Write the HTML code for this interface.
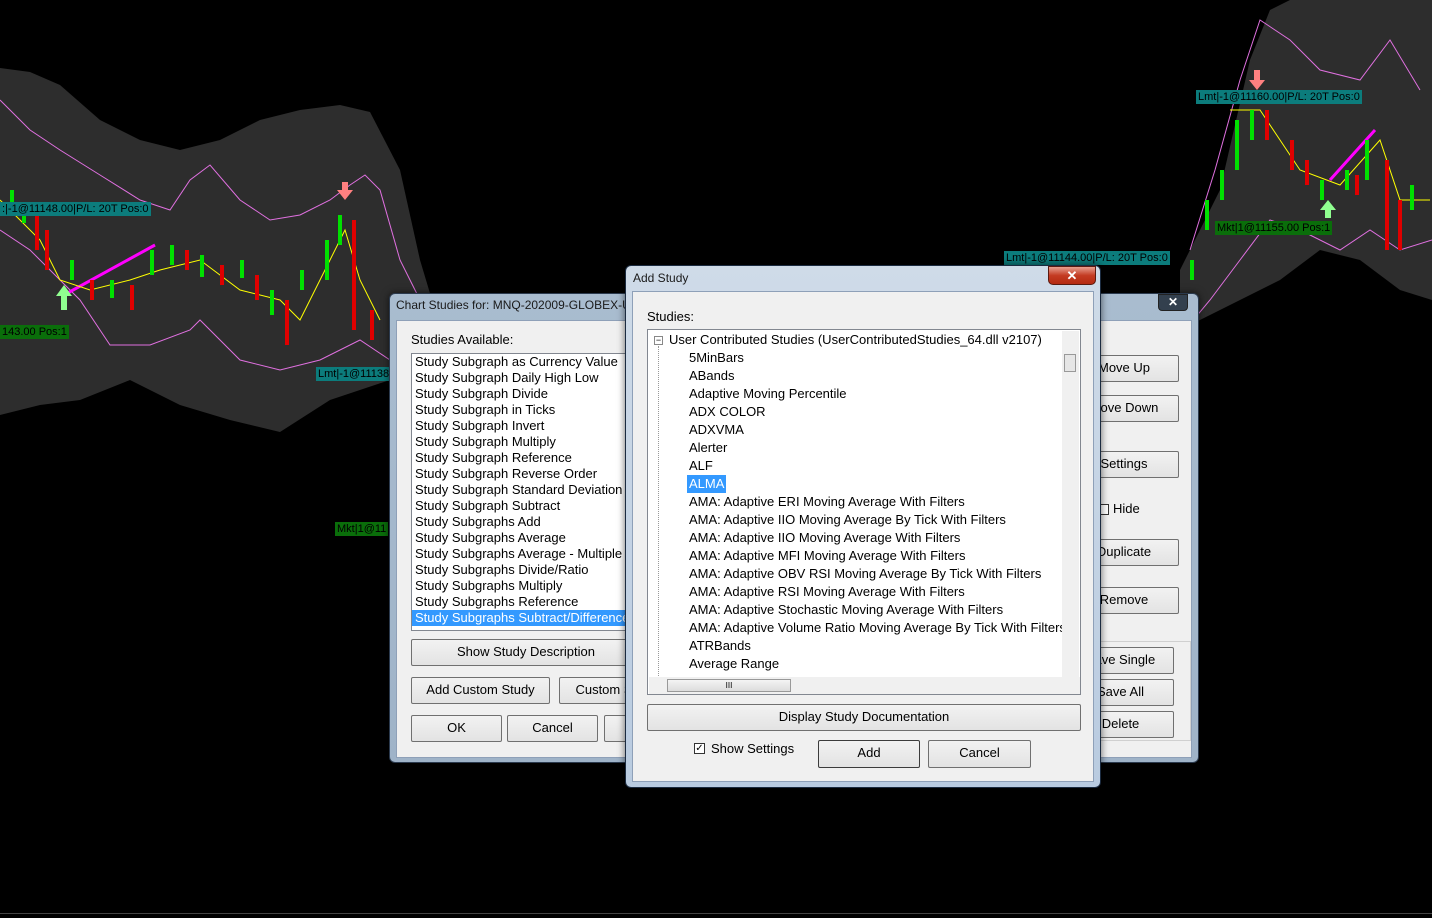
<!DOCTYPE html>
<html><head><meta charset="utf-8"><style>
*{margin:0;padding:0;box-sizing:border-box}
body{width:1432px;height:918px;background:#000;position:relative;overflow:hidden;font-family:"Liberation Sans",sans-serif;font-size:13px;color:#000}
.a{position:absolute}
.win{position:absolute;border:1px solid #2b3a4e;border-radius:6px;background:linear-gradient(#cfdbe8,#b9cbe0);box-shadow:0 0 8px rgba(0,0,0,.6)}
.client{position:absolute;background:#f0f0f0;border:1px solid #8ea0b8}
.btn{position:absolute;background:linear-gradient(#f2f2f2,#e3e3e3);border:1px solid #707070;border-radius:2px;text-align:center;line-height:24px;font-size:13px;white-space:nowrap;overflow:hidden}
.list{position:absolute;background:#fff;border:1px solid #828790;overflow:hidden}
.li{height:16px;line-height:16px;padding-left:3px;white-space:nowrap}
.ti{position:absolute;left:41px;white-space:nowrap;line-height:16px}
.lbl{position:absolute;font-size:11px;line-height:14px;padding:0 2px;white-space:nowrap}
</style></head><body>
<svg class="a" style="left:0;top:0" width="1432" height="918">
<polygon fill="#2d2d2d" points="0,68 30,72 60,85 100,120 140,140 180,150 220,140 260,120 300,110 340,105 370,112 400,170 420,260 432,300 432,330 390,380 330,400 280,432 230,420 180,405 130,380 80,400 40,405 0,415"/>
<polygon fill="#2d2d2d" points="1180,270 1220,190 1250,60 1270,10 1290,0 1432,0 1432,300 1400,290 1360,260 1320,250 1280,280 1240,300 1200,320 1180,330"/>
<polyline fill="none" stroke="#e070e0" stroke-width="1" points="0,100 30,130 60,150 100,175 140,200 170,210 190,180 210,165 240,200 270,220 300,215 330,200 350,185 365,175 380,190 400,260 420,300"/>
<polyline fill="none" stroke="#e070e0" stroke-width="1" points="0,230 30,250 60,280 80,300 110,345 150,345 190,330 200,320 240,360 280,370 320,360 360,340 390,360"/>
<polyline fill="none" stroke="#e070e0" stroke-width="1" points="1190,250 1215,170 1240,80 1260,20 1290,40 1320,70 1360,80 1390,40 1420,90"/>
<polyline fill="none" stroke="#e070e0" stroke-width="1" points="1185,330 1210,300 1240,260 1270,220 1300,230 1340,250 1370,230 1400,250 1432,240"/>
<polyline fill="none" stroke="#ff00ff" stroke-width="3" points="64,295 155,245"/>
<polyline fill="none" stroke="#ff00ff" stroke-width="3" points="1330,180 1375,130"/>
<polyline fill="none" stroke="#ffff00" stroke-width="1" points="0,200 40,240 60,280 90,290 130,280 160,270 200,260 240,290 280,300 300,320 330,260 345,230 360,280 380,320"/>
<polyline fill="none" stroke="#ffff00" stroke-width="1" points="1230,110 1260,110 1300,170 1340,185 1380,140 1400,200 1430,200"/>
<g fill="#00e000">
<rect x="10" y="190" width="4" height="20"/><rect x="22" y="205" width="4" height="18"/><rect x="70" y="260" width="4" height="20"/><rect x="110" y="280" width="4" height="18"/><rect x="150" y="250" width="4" height="25"/><rect x="170" y="245" width="4" height="20"/><rect x="200" y="255" width="4" height="22"/><rect x="240" y="260" width="4" height="18"/><rect x="270" y="290" width="4" height="25"/><rect x="300" y="270" width="4" height="20"/><rect x="325" y="240" width="4" height="40"/><rect x="338" y="215" width="4" height="30"/>
<rect x="1190" y="260" width="4" height="20"/><rect x="1205" y="200" width="4" height="30"/><rect x="1220" y="170" width="4" height="30"/><rect x="1235" y="120" width="4" height="50"/><rect x="1250" y="110" width="4" height="30"/><rect x="1320" y="180" width="4" height="20"/><rect x="1345" y="170" width="4" height="20"/><rect x="1365" y="140" width="4" height="40"/><rect x="1410" y="185" width="4" height="25"/>
</g>
<g fill="#e00000">
<rect x="35" y="215" width="4" height="35"/><rect x="45" y="230" width="4" height="40"/><rect x="90" y="280" width="4" height="20"/><rect x="130" y="285" width="4" height="25"/><rect x="185" y="250" width="4" height="20"/><rect x="220" y="265" width="4" height="20"/><rect x="255" y="275" width="4" height="25"/><rect x="285" y="300" width="4" height="45"/><rect x="352" y="220" width="4" height="110"/><rect x="370" y="310" width="4" height="30"/>
<rect x="1265" y="110" width="4" height="30"/><rect x="1290" y="140" width="4" height="30"/><rect x="1305" y="160" width="4" height="25"/><rect x="1355" y="175" width="4" height="20"/><rect x="1385" y="160" width="4" height="90"/><rect x="1398" y="200" width="4" height="50"/>
</g>
<polygon fill="#90ff90" points="64,285 56,296 61,296 61,310 67,310 67,296 72,296"/>
<polygon fill="#ff8080" points="345,200 337,190 342,190 342,182 348,182 348,190 353,190"/>
<polygon fill="#ff8080" points="1257,90 1249,80 1254,80 1254,70 1260,70 1260,80 1265,80"/>
<polygon fill="#90ff90" points="1328,200 1320,210 1325,210 1325,218 1331,218 1331,210 1336,210"/>
<rect x="0" y="913" width="1432" height="1" fill="#444"/>
</svg>
<div class="lbl" style="left:0;top:202px;background:#0c7c7c;color:#000">:|-1@11148.00|P/L: 20T Pos:0</div>
<div class="lbl" style="left:0;top:325px;background:#0a6e0a;color:#000">143.00 Pos:1</div>
<div class="lbl" style="left:316px;top:367px;background:#0c7c7c;color:#000">Lmt|-1@11138</div>
<div class="lbl" style="left:335px;top:522px;background:#0a6e0a;color:#000">Mkt|1@11</div>
<div class="lbl" style="left:1196px;top:90px;background:#0c7c7c;color:#000">Lmt|-1@11160.00|P/L: 20T Pos:0</div>
<div class="lbl" style="left:1004px;top:251px;background:#0c7c7c;color:#000">Lmt|-1@11144.00|P/L: 20T Pos:0</div>
<div class="lbl" style="left:1215px;top:221px;background:#0a6e0a;color:#000">Mkt|1@11155.00 Pos:1</div>

<!-- back dialog -->
<div class="win" style="left:389px;top:293px;width:810px;height:470px;background:linear-gradient(#a9bccf,#9fb3c8)">
<div class="a" style="left:6px;top:4px;font-size:12px;color:#1a1a1a">Chart Studies for: MNQ-202009-GLOBEX-U</div>
<div class="a" style="left:768px;top:0;width:30px;height:17px;background:#33404e;border:1px solid #222;border-radius:0 0 4px 4px;color:#fff;text-align:center;font-size:12px;line-height:15px;font-weight:bold">✕</div>
<div class="client" style="left:6px;top:26px;width:796px;height:438px">
<div class="a" style="left:14px;top:11px">Studies Available:</div>
<div class="list" style="left:14px;top:32px;width:230px;height:278px">
<div class="li">Study Subgraph as Currency Value</div><div class="li">Study Subgraph Daily High Low</div><div class="li">Study Subgraph Divide</div><div class="li">Study Subgraph in Ticks</div><div class="li">Study Subgraph Invert</div><div class="li">Study Subgraph Multiply</div><div class="li">Study Subgraph Reference</div><div class="li">Study Subgraph Reverse Order</div><div class="li">Study Subgraph Standard Deviation</div><div class="li">Study Subgraph Subtract</div><div class="li">Study Subgraphs Add</div><div class="li">Study Subgraphs Average</div><div class="li">Study Subgraphs Average - Multiple</div><div class="li">Study Subgraphs Divide/Ratio</div><div class="li">Study Subgraphs Multiply</div><div class="li">Study Subgraphs Reference</div><div class="li" style="background:#3399ff;color:#fff">Study Subgraphs Subtract/Difference</div>
</div>
<div class="btn" style="left:14px;top:318px;width:230px;height:27px">Show Study Description</div>
<div class="btn" style="left:14px;top:356px;width:139px;height:27px">Add Custom Study</div>
<div class="btn" style="left:162px;top:356px;width:90px;height:27px">Custom S</div>
<div class="btn" style="left:14px;top:394px;width:91px;height:27px">OK</div>
<div class="btn" style="left:110px;top:394px;width:91px;height:27px">Cancel</div>
<div class="btn" style="left:207px;top:394px;width:40px;height:27px"></div>
<div class="btn" style="left:672px;top:34px;width:110px;height:27px">Move Up</div>
<div class="btn" style="left:672px;top:74px;width:110px;height:27px">Move Down</div>
<div class="btn" style="left:672px;top:130px;width:110px;height:27px">Settings</div>
<div class="a" style="left:701px;top:183px;width:11px;height:11px;border:1px solid #333;background:#fff"></div>
<div class="a" style="left:716px;top:180px">Hide</div>
<div class="btn" style="left:672px;top:218px;width:110px;height:27px">Duplicate</div>
<div class="btn" style="left:672px;top:266px;width:110px;height:27px">Remove</div>
<div class="a" style="left:660px;top:320px;width:134px;height:100px;border:1px solid #d0d0d0"></div>
<div class="btn" style="left:670px;top:326px;width:107px;height:27px">Save Single</div>
<div class="btn" style="left:670px;top:358px;width:107px;height:27px">Save All</div>
<div class="btn" style="left:670px;top:390px;width:107px;height:27px">Delete</div>
</div></div>

<!-- front dialog -->
<div class="win" style="left:625px;top:265px;width:476px;height:523px;border-color:#1b2b40">
<div class="a" style="left:7px;top:5px;font-size:12px;color:#1a1a1a">Add Study</div>
<div class="a" style="left:422px;top:0;width:48px;height:19px;background:linear-gradient(#e8a090,#c43b22 50%,#b42a12);border:1px solid #5a1a10;border-radius:0 0 5px 5px;color:#fff;text-align:center;font-size:13px;line-height:17px;font-weight:bold">✕</div>
<div class="client" style="left:6px;top:25px;width:462px;height:491px">
<div class="a" style="left:14px;top:17px">Studies:</div>
<div class="list" style="left:14px;top:37px;width:434px;height:366px">
<div class="a" style="left:6px;top:6px;width:9px;height:9px;border:1px solid #888;font-size:9px;line-height:6px;text-align:center;background:#fff">−</div>
<div class="a" style="left:10px;top:16px;height:330px;border-left:1px dotted #999"></div>
<div class="ti" style="left:21px;top:2px">User Contributed Studies (UserContributedStudies_64.dll v2107)</div>
<div class="ti" style="top:20px">5MinBars</div><div class="ti" style="top:38px">ABands</div><div class="ti" style="top:56px">Adaptive Moving Percentile</div><div class="ti" style="top:74px">ADX COLOR</div><div class="ti" style="top:92px">ADXVMA</div><div class="ti" style="top:110px">Alerter</div><div class="ti" style="top:128px">ALF</div>
<div class="ti" style="top:145px;left:39px;background:#3399ff;color:#fff;padding:1px 2px">ALMA</div>
<div class="ti" style="top:164px">AMA: Adaptive ERI Moving Average With Filters</div><div class="ti" style="top:182px">AMA: Adaptive IIO Moving Average By Tick With Filters</div><div class="ti" style="top:200px">AMA: Adaptive IIO Moving Average With Filters</div><div class="ti" style="top:218px">AMA: Adaptive MFI Moving Average With Filters</div><div class="ti" style="top:236px">AMA: Adaptive OBV RSI Moving Average By Tick With Filters</div><div class="ti" style="top:254px">AMA: Adaptive RSI Moving Average With Filters</div><div class="ti" style="top:272px">AMA: Adaptive Stochastic Moving Average With Filters</div><div class="ti" style="top:290px">AMA: Adaptive Volume Ratio Moving Average By Tick With Filters</div><div class="ti" style="top:308px">ATRBands</div><div class="ti" style="top:326px">Average Range</div>
<div class="a" style="left:414px;top:1px;width:17px;height:346px;background:#f0f0f0"></div>
<div class="a" style="left:416px;top:24px;width:12px;height:18px;background:#e6e6e6;border:1px solid #999"></div>
<div class="a" style="left:1px;top:347px;width:432px;height:17px;background:#f0f0f0"></div>
<div class="a" style="left:19px;top:349px;width:124px;height:13px;background:linear-gradient(#f4f4f4,#dcdcdc);border:1px solid #999;font-size:8px;text-align:center;line-height:11px">III</div>
</div>
<div class="btn" style="left:14px;top:412px;width:434px;height:27px">Display Study Documentation</div>
<div class="a" style="left:61px;top:451px;width:11px;height:11px;border:1px solid #333;background:#fff;font-size:10px;line-height:9px;text-align:center">✓</div>
<div class="a" style="left:78px;top:449px">Show Settings</div>
<div class="btn" style="left:185px;top:448px;width:102px;height:28px;border-color:#3c3c3c">Add</div>
<div class="btn" style="left:295px;top:448px;width:103px;height:28px">Cancel</div>
</div></div>
</body></html>
